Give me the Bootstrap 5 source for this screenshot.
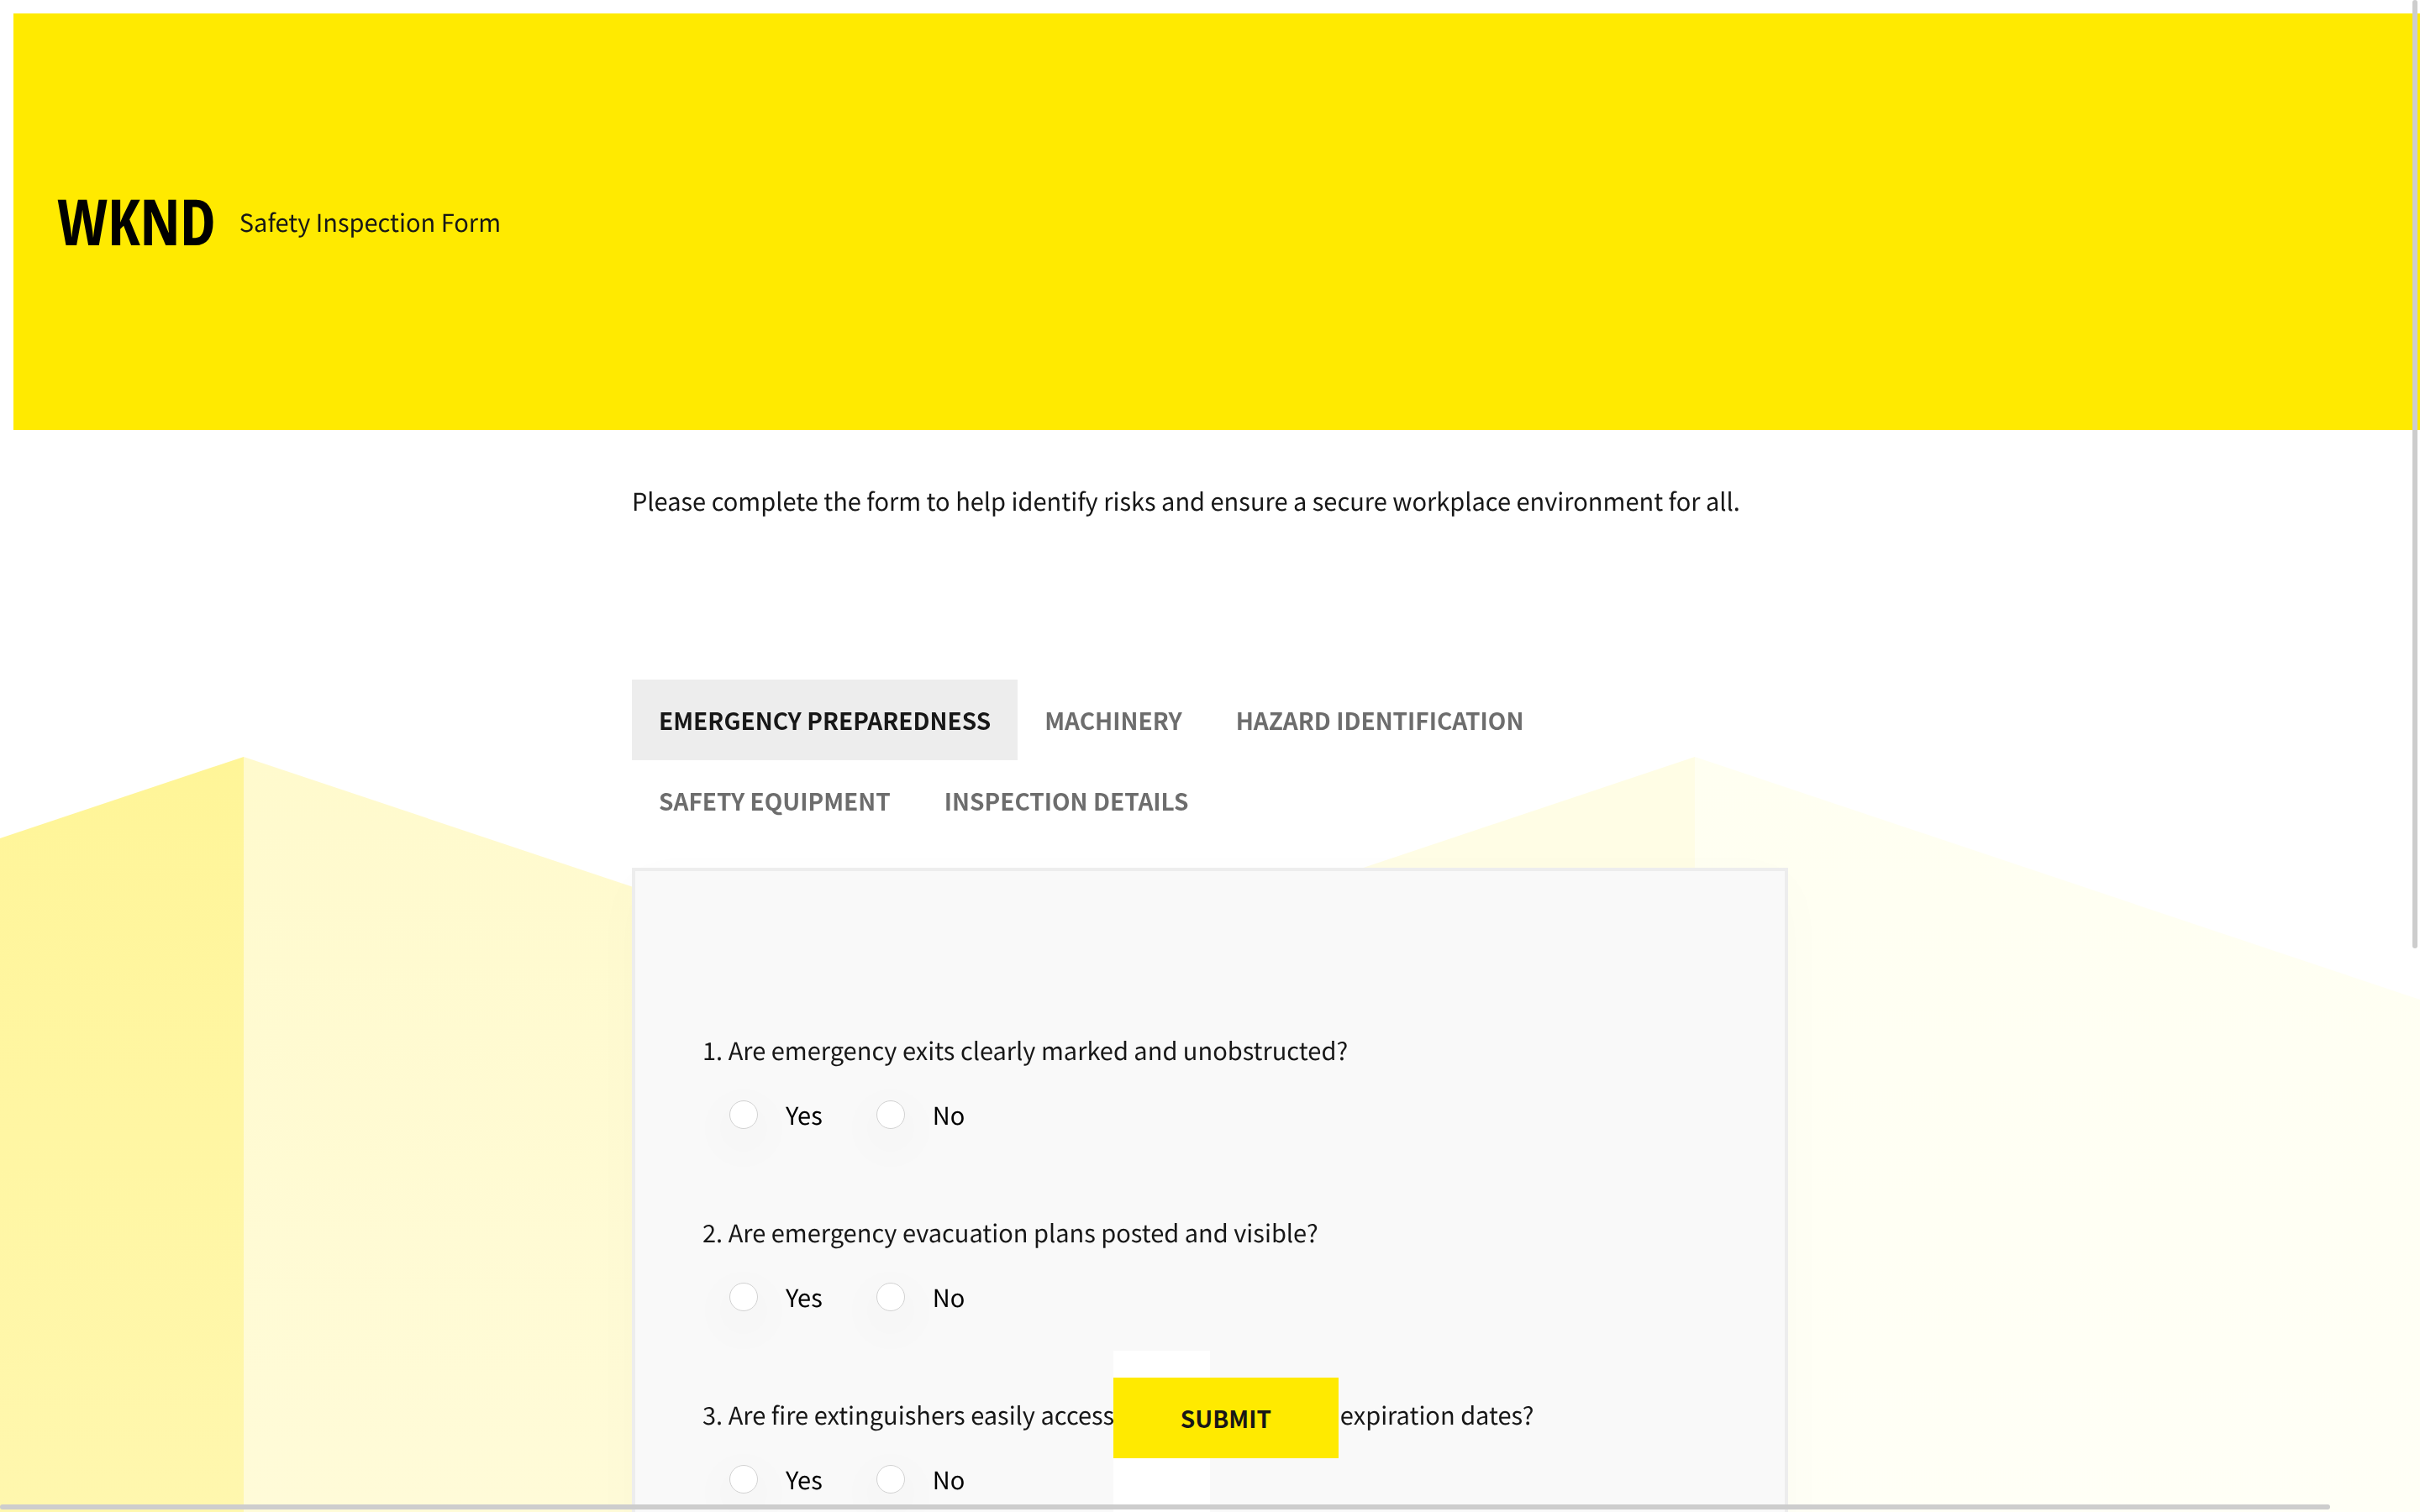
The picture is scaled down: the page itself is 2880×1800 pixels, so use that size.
<!DOCTYPE html>
<html lang="en">
<head>
<meta charset="utf-8">
<meta name="viewport" content="width=device-width, initial-scale=1">
<title>WKND Safety Inspection Form</title>
<link href="https://cdn.jsdelivr.net/npm/bootstrap@5.3.0/dist/css/bootstrap.min.css" rel="stylesheet">
<style>
  :root { --wknd-yellow: #ffea00; --ink: #171717; }
  body { font-family: "Noto Sans CJK SC", "Noto Sans", sans-serif; font-size: 29px; line-height: 48px; text-rendering: geometricPrecision; color: var(--ink); background: #fff; }
  .backdrop { z-index: -1; }
  .site-header { margin: 16px 0 0 16px; padding: 0 52px; min-height: 496px; background: var(--wknd-yellow); gap: 28px; }
  .brand { font-family: "Open Sans Condensed", "Roboto Condensed", "DejaVu Sans Condensed", sans-serif; font-weight: 700; font-size: 76px; line-height: 64px; color: #000; text-decoration: none; }
  .form-column { width: 1376px; max-width: 100%; padding-top: 60px; }
  .intro { margin-bottom: 189px; }
  .section-tabs { margin-bottom: 32px; }
  .section-tabs .nav-link { padding: 24px 32px; border-radius: 0; font-size: 28px; line-height: 48px; font-weight: 600; color: #6d6d6d; text-transform: uppercase; }
  .section-tabs .nav-link.active { color: var(--ink); background: #ededed; }
  .panel { padding: 189px 80px 80px; border: 4px solid #ededed; background: #f9f9f9; box-shadow: 0 16px 64px rgba(0, 0, 0, .02); }
  .question { margin-bottom: 92px; }
  .question legend { font-size: 29px; line-height: 48px; margin-bottom: 29px; }
  .answers { padding-left: 32px; gap: 64px; color: #000; }
  .answer { gap: 33px; }
  .answer .form-check-input { width: 34px; height: 34px; margin: 0; border: 1px solid #d2d2d2; background-color: #fff; box-shadow: 0 16px 48px 20px rgba(0, 0, 0, .014); }
  .answer .form-check-input:checked { background-color: var(--ink); border-color: var(--ink); }
  .submit-bar { left: 46%; right: 50%; padding: 32px 0 64px; background: #fff; }
  .submit-bar .btn { padding: 24px 80px; border: 0; border-radius: 0; font-size: 28px; line-height: 48px; font-weight: 600; color: var(--ink); background: var(--wknd-yellow); }
  .thumb { z-index: 1040; border-radius: 3px; background: #cdcdcd; }
  .thumb-y { top: 0; right: 3px; width: 6px; height: 62.7%; }
  .thumb-x { left: 0; bottom: 3px; height: 6px; width: 96.3%; }
</style>
</head>
<body class="vh-100 overflow-hidden">
<svg class="backdrop position-fixed top-0 start-0 w-100 h-100" viewBox="0 0 2880 1800" preserveAspectRatio="none" aria-hidden="true">
  <defs>
    <linearGradient id="fadeDark" gradientUnits="userSpaceOnUse" x1="0" y1="901" x2="0" y2="1800"><stop stop-color="#fff598"/><stop offset="1" stop-color="#fff7ae"/></linearGradient>
    <linearGradient id="fadeLight" gradientUnits="userSpaceOnUse" x1="0" y1="901" x2="0" y2="1800"><stop stop-color="#fffacd"/><stop offset="1" stop-color="#fffbd8"/></linearGradient>
    <linearGradient id="fadePale" gradientUnits="userSpaceOnUse" x1="0" y1="901" x2="0" y2="1800"><stop stop-color="#fffff1"/><stop offset="1" stop-color="#fffff6"/></linearGradient>
  </defs>
  <path fill="url(#fadeDark)" d="M0 998 290 901V1800H0Z"/>
  <path fill="url(#fadeLight)" d="M290 901 1154 1190V1800H290Z"/>
  <path fill="#fffde5" d="M1154 1190 2017 901V1800H1154Z"/>
  <path fill="url(#fadePale)" d="M2017 901 2880 1190V1800H2017Z"/>
</svg>

<header class="site-header d-flex align-items-center">
  <a class="brand" href="#">WKND</a>
  <span>Safety Inspection Form</span>
</header>

<main class="form-column mx-auto">
  <p class="intro">Please complete the form to help identify risks and ensure a secure workplace environment for all.</p>
  <form>
    <ul class="section-tabs nav nav-pills" role="tablist">
      <li class="nav-item"><button type="button" class="nav-link active" role="tab" aria-selected="true">Emergency Preparedness</button></li>
      <li class="nav-item"><button type="button" class="nav-link" role="tab">Machinery</button></li>
      <li class="nav-item"><button type="button" class="nav-link" role="tab">Hazard Identification</button></li>
      <li class="nav-item"><button type="button" class="nav-link" role="tab">Safety Equipment</button></li>
      <li class="nav-item"><button type="button" class="nav-link" role="tab">Inspection Details</button></li>
    </ul>
    <section class="panel" role="tabpanel">
      <fieldset class="question">
        <legend>1. Are emergency exits clearly marked and unobstructed?</legend>
        <div class="answers d-flex">
          <div class="answer d-flex align-items-center"><input class="form-check-input" type="radio" name="exits" id="exitsYes"><label for="exitsYes">Yes</label></div>
          <div class="answer d-flex align-items-center"><input class="form-check-input" type="radio" name="exits" id="exitsNo"><label for="exitsNo">No</label></div>
        </div>
      </fieldset>
      <fieldset class="question">
        <legend>2. Are emergency evacuation plans posted and visible?</legend>
        <div class="answers d-flex">
          <div class="answer d-flex align-items-center"><input class="form-check-input" type="radio" name="plans" id="plansYes"><label for="plansYes">Yes</label></div>
          <div class="answer d-flex align-items-center"><input class="form-check-input" type="radio" name="plans" id="plansNo"><label for="plansNo">No</label></div>
        </div>
      </fieldset>
      <fieldset class="question">
        <legend>3. Are fire extinguishers easily accessible and within safe expiration dates?</legend>
        <div class="answers d-flex">
          <div class="answer d-flex align-items-center"><input class="form-check-input" type="radio" name="extinguishers" id="extYes"><label for="extYes">Yes</label></div>
          <div class="answer d-flex align-items-center"><input class="form-check-input" type="radio" name="extinguishers" id="extNo"><label for="extNo">No</label></div>
        </div>
      </fieldset>
    </section>
    <div class="submit-bar position-fixed bottom-0 d-flex">
      <button type="submit" class="btn flex-shrink-0">SUBMIT</button>
    </div>
  </form>
</main>
<div class="thumb thumb-y position-fixed"></div>
<div class="thumb thumb-x position-fixed"></div>
<script src="https://cdn.jsdelivr.net/npm/bootstrap@5.3.0/dist/js/bootstrap.bundle.min.js"></script>
</body>
</html>
